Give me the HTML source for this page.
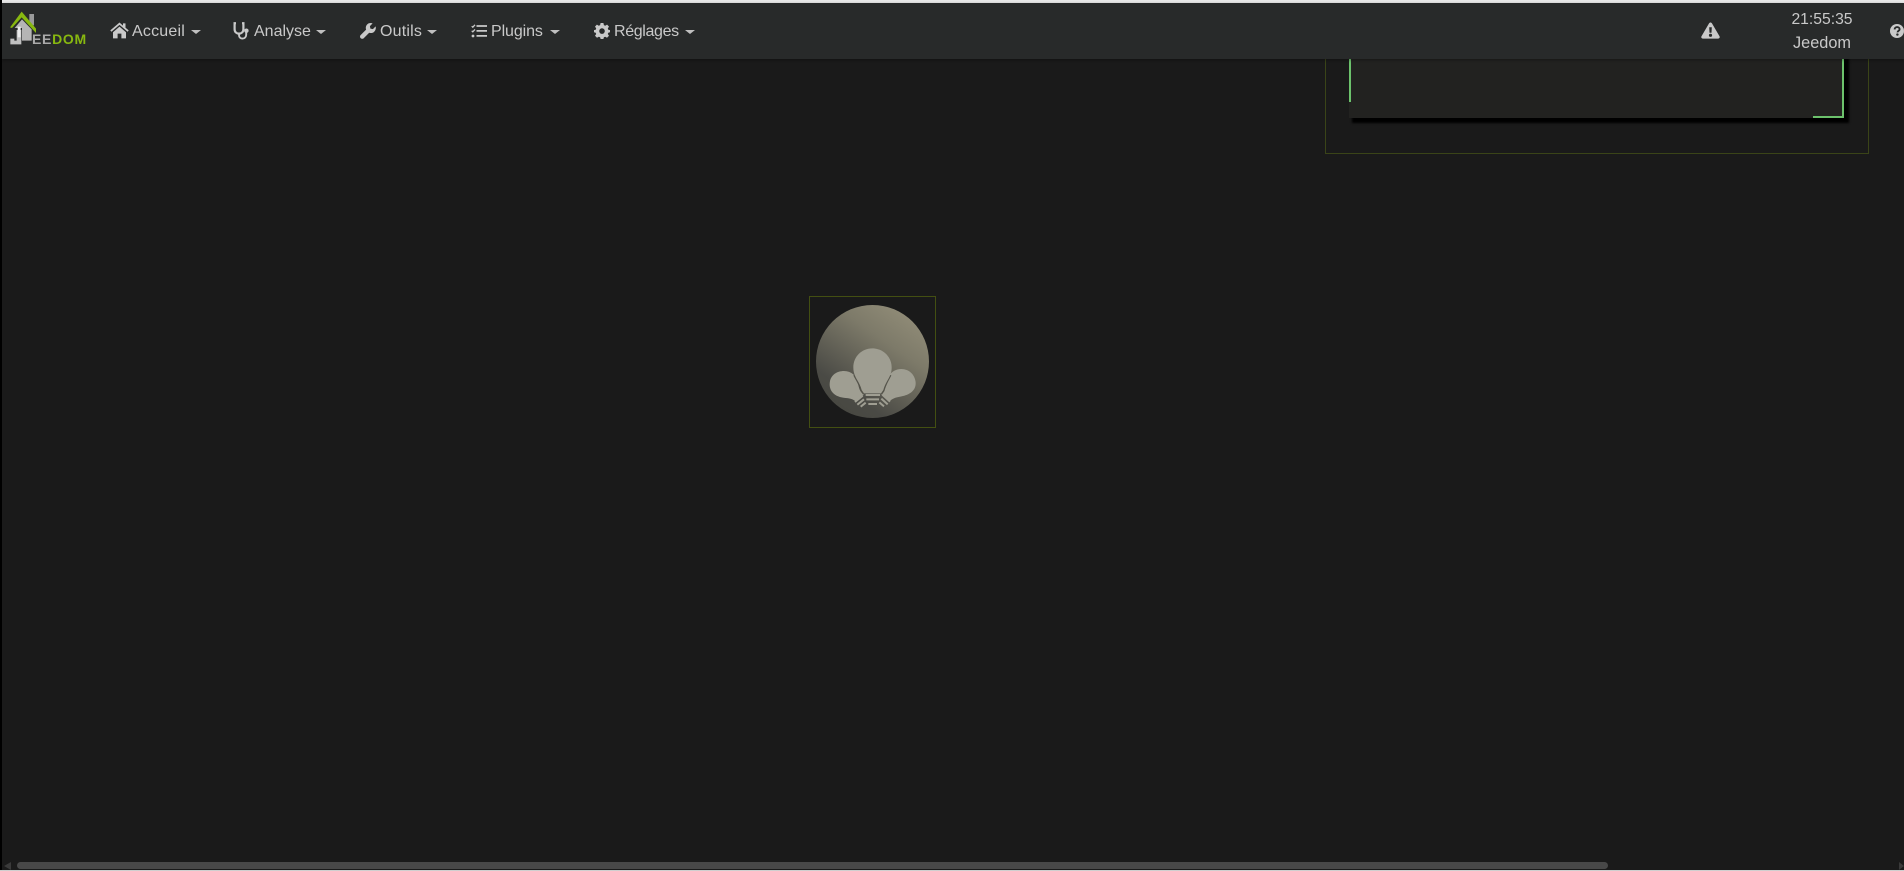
<!DOCTYPE html>
<html lang="fr">
<head>
<meta charset="utf-8">
<title>Jeedom</title>
<style>
html,body{margin:0;padding:0;width:1904px;height:871px;overflow:hidden;background:#1a1a1a;font-family:"Liberation Sans",sans-serif;color:#c8c8c8}
.abs{position:absolute}
#top{left:0;top:0;width:1904px;height:2.5px;background:#e8e8e8}
#left{left:0;top:0;width:2px;height:871px;background:#000}
#nav{left:2px;top:3px;width:1902px;height:56px;background:#282a2a;box-shadow:0 1px 3px rgba(0,0,0,.35);z-index:5}
.t{position:absolute;font-size:16px;line-height:20px;white-space:nowrap;color:#c9c9c9;z-index:6}
.c{position:absolute;width:0;height:0;border-left:5.5px solid transparent;border-right:5.5px solid transparent;border-top:4.5px solid #c0c0c0;top:30px;z-index:6}
svg{position:absolute;z-index:6;overflow:visible}
#outer{left:1325px;top:30px;width:542px;height:122px;border:1px solid #3a4418}
#inner{left:1349px;top:30px;width:495px;height:88px;background:#222220;box-shadow:4px 4px 2px 1px #000}
#box{left:809px;top:296px;width:125px;height:130px;border:1px solid #434f12}
#circle{left:816px;top:305px;width:113px;height:113px;border-radius:50%;background:linear-gradient(215deg,#938e79 8%,#7d7a69 35%,#4a4a45 75%,#46463e 100%)}
#track{left:17px;top:862px;width:1591px;height:7px;border-radius:4px;background:#484848}
#bot{left:0;top:870px;width:1904px;height:1px;background:#cfcfcf}
</style>
</head>
<body>
<div class="abs" id="top"></div>
<div class="abs" id="left"></div>

<div class="abs" id="outer"></div>
<div class="abs" id="inner"></div>
<div class="abs" style="left:1349px;top:59px;width:2px;height:43px;background:#6cc26c"></div>
<div class="abs" style="left:1842px;top:59px;width:2px;height:59px;background:#6cc26c"></div>
<div class="abs" style="left:1813px;top:116px;width:31px;height:2px;background:#6cc26c"></div>

<div class="abs" id="nav"></div>

<!-- logo -->
<svg style="left:0;top:0" width="100" height="60" viewBox="0 0 300 180">
  <path d="M88 42h14v34H88z" fill="#9a9a9a"/>
  <path d="M44 84 66 58 95 88V122H66V84Z" fill="#b5b5b5"/>
  <path d="M30 82 65 35 108 86V99L65 52 36 84Z" fill="#88b810"/>
  <path d="M50 90H64V133H31V116H43V122H50Z" fill="#c0c0c0"/>
  <path d="M53 80H62V112H53Z" fill="#ececec"/>
</svg>
<div class="t" style="left:32px;top:34px;font-size:14px;line-height:11px;height:11px;font-weight:bold;letter-spacing:.7px;color:#aaa">EE<span style="color:#88b810">DOM</span></div>

<!-- Accueil -->
<svg style="left:110px;top:22px" width="19" height="17" viewBox="0 0 19 17">
  <path d="M9.5 0.5 0.3 8.4 1.4 9.8 9.5 2.9 17.6 9.8 18.7 8.4 15.5 5.7V1.4H13V3.6Z" fill="#c9c9c9"/>
  <path d="M9.5 4.6 3 10.2V16.4H7.6V11.6H11.4V16.4H16V10.2Z" fill="#c9c9c9"/>
</svg>
<div class="t" style="left:132px;top:22px;letter-spacing:.2px">Accueil</div>
<div class="c" style="left:191px"></div>

<!-- Analyse -->
<svg style="left:233px;top:22px" width="18" height="18" viewBox="0 0 18 18">
  <path d="M3 1.2H1.6V7.2C1.6 10 3.6 11.6 6 11.6S10.4 10 10.4 7.2V1.2H9" fill="none" stroke="#c9c9c9" stroke-width="2.2"/>
  <path d="M6 11.6V13C6 15.4 7.6 16.6 9.6 16.6S13.2 15 13.2 12.8V10.5" fill="none" stroke="#c9c9c9" stroke-width="1.9"/>
  <circle cx="13.4" cy="8.7" r="2.2" fill="#c9c9c9"/>
</svg>
<div class="t" style="left:254px;top:22px">Analyse</div>
<div class="c" style="left:316px"></div>

<!-- Outils -->
<svg style="left:360px;top:23px" width="16" height="16" viewBox="0 0 16 16">
  <path d="M15.6 3.4 12.9 6.1 10.4 5.6 9.9 3.1 12.6 .4C10.6-.4 8.2.1 6.9 1.7 5.7 3.1 5.5 5 6.1 6.6L.6 12.1C-.2 12.9-.2 14.2.6 15.1 1.5 16 2.8 16 3.7 15.2L9.2 9.7C10.9 10.4 12.9 10 14.2 8.7 15.7 7.2 16.2 5.2 15.6 3.4Z" fill="#c9c9c9"/>
</svg>
<div class="t" style="left:380px;top:22px;letter-spacing:.2px">Outils</div>
<div class="c" style="left:427px"></div>

<!-- Plugins -->
<svg style="left:471px;top:24px" width="16" height="14" viewBox="0 0 16 14">
  <path d="M0.7 2.2 1.8 3.2 4 .8M0.7 6.8 1.8 7.8 4 5.4" fill="none" stroke="#c9c9c9" stroke-width="1.3"/>
  <circle cx="2" cy="12" r="1.4" fill="#c9c9c9"/>
  <path d="M5.5 1.1H16V2.9H5.5ZM5.5 6H16V7.8H5.5ZM5.5 11H16V12.8H5.5Z" fill="#c9c9c9"/>
</svg>
<div class="t" style="left:491px;top:22px;letter-spacing:-.1px">Plugins</div>
<div class="c" style="left:550px"></div>

<!-- Réglages -->
<svg style="left:594px;top:23px" width="16" height="16" viewBox="0 0 16 16">
  <path fill-rule="evenodd" d="M6.6 0H9.4L9.9 2.1 11.2 2.7 13.1 1.6 15 3.6 13.8 5.4 14.3 6.7 16 7.1V9.3L14.3 9.8 13.8 11 15 12.8 13 14.8 11.2 13.7 9.9 14.2 9.4 16H6.6L6.1 14.2 4.8 13.7 3 14.8 1 12.8 2.2 11 1.7 9.8 0 9.3V7.1L1.7 6.7 2.2 5.4 1 3.6 2.9 1.6 4.8 2.7 6.1 2.1ZM8 5.3A2.8 2.8 0 1 0 8 10.9 2.8 2.8 0 1 0 8 5.3Z" fill="#c9c9c9"/>
</svg>
<div class="t" style="left:614px;top:22px;letter-spacing:-.35px">Réglages</div>
<div class="c" style="left:685px"></div>

<!-- right -->
<svg style="left:1701px;top:22px" width="19" height="17" viewBox="0 0 19 17">
  <path fill-rule="evenodd" d="M9.5 .5C10.1.5 10.6.8 10.9 1.3L18.5 14.3C19.1 15.4 18.4 16.6 17.1 16.6H1.9C.6 16.6-.1 15.4.5 14.3L8.1 1.3C8.4.8 8.9.5 9.5.5ZM8.2 5.2 8.5 10.8H10.5L10.8 5.2ZM9.5 11.7A1.6 1.6 0 1 0 9.5 14.9 1.6 1.6 0 1 0 9.5 11.7Z" fill="#c9c9c9"/>
</svg>
<div class="t" style="left:1791px;top:10px;font-size:15.7px;width:62px;text-align:center">21:55:35</div>
<div class="t" style="left:1791px;top:33px;font-size:16.3px;width:62px;text-align:center">Jeedom</div>
<svg style="left:1890px;top:24px" width="14" height="14" viewBox="0 0 14 14">
  <circle cx="7" cy="7" r="7" fill="#c9c9c9"/>
  <path d="M4.6 5.4C4.7 3.9 5.8 3.1 7.1 3.1 8.5 3.1 9.6 4 9.6 5.2 9.6 6.9 7.5 6.9 7.5 8.4" fill="none" stroke="#282a2a" stroke-width="1.9"/>
  <circle cx="7.4" cy="10.6" r="1.2" fill="#282a2a"/>
</svg>

<!-- widget -->
<div class="abs" id="box"></div>
<div class="abs" id="circle"></div>
<svg style="left:800px;top:290px" width="145" height="140" viewBox="0 0 435 420">
  <g fill="#9f9e92">
    <path d="M89 283C89 258 108 243 132 243 158 243 172 262 175 285 178 300 182 307 192 314L167 334C152 322 142 326 125 322 105 318 89 305 89 283Z"/>
    <path d="M347 280C347 256 328 237 304 237 278 237 262 257 259 280 256 296 252 304 242 312L268 334C282 322 292 322 309 318 330 313 347 301 347 280Z"/>
  </g>
  <path d="M163 255C172 272 180 282 185 302L192 312M271 255C262 272 255 282 250 302L243 312" fill="none" stroke="#55544b" stroke-width="7"/>
  <path d="M217 175C185 175 160 200 160 232 160 262 178 272 185 300L192 310H243L250 300C257 272 275 262 275 232 275 200 249 175 217 175Z" fill="#9f9e92"/>
  <g stroke="#9f9e92" stroke-width="6" fill="none">
    <path d="M197 315H240M199 328H237M205 342H231"/>
    <path d="M188 317 165 336M192 328 172 344M197 338 182 350"/>
    <path d="M247 314 270 335M244 326 263 343M238 337 252 349"/>
  </g>
</svg>

<!-- scrollbar -->
<svg style="left:4px;top:862px" width="8" height="8" viewBox="0 0 8 8"><path d="M7 0V8L0 4Z" fill="#3a3a3a"/></svg>
<div class="abs" id="track"></div>
<svg style="left:1899px;top:862px" width="5" height="8" viewBox="0 0 5 8"><path d="M0 0V8L5 4Z" fill="#3a3a3a"/></svg>
<div class="abs" id="bot"></div>
</body>
</html>
